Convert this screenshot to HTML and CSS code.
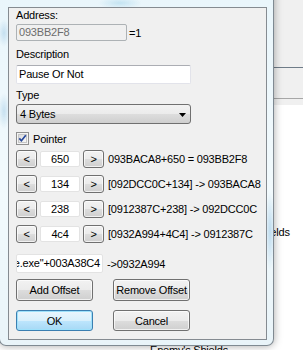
FILE: index.html
```html
<!DOCTYPE html>
<html lang="en">
<head>
  <meta charset="UTF-8">
  <title>Change address</title>
  <link rel="stylesheet" href="styles.css">
</head>
<body>

  <!-- Main window behind the dialog -->
  <div class="bg-window">
    <div class="bg-toolbar"></div>
    <div class="bg-bar"></div>
    <div class="bg-list">
      <div class="bg-item item-shields">Shields</div>
      <div class="bg-item item-v">v</div>
      <div class="bg-item item-enemy">Enemy's Shields</div>
    </div>
  </div>

  <!-- Change address dialog -->
  <div class="dialog">
    <div class="client">
      <div class="label">Address:</div>
      <div class="addr-row">
        <div class="textbox disabled addr-box">093BB2F8</div>
        <span class="addr-eq">=1</span>
      </div>

      <div class="label gap-label">Description</div>
      <div class="textbox wide desc-box">Pause Or Not</div>

      <div class="label type-label">Type</div>
      <div class="combo wide">
        <span>4 Bytes</span>
        <svg class="combo-arrow" width="7" height="4" viewBox="0 0 7 4"><path d="M0 0H7L3.5 4Z" fill="#000"/></svg>
      </div>

      <div class="check-row">
        <svg class="checkbox" width="13" height="13" viewBox="0 0 13 13">
          <defs>
            <linearGradient id="cbfill" x1="0" y1="0" x2="1" y2="1">
              <stop offset="0" stop-color="#d8d8d8"/>
              <stop offset="1" stop-color="#fbfbfb"/>
            </linearGradient>
          </defs>
          <rect x="0.5" y="0.5" width="12" height="12" fill="#f4f4f4" stroke="#8f8f8f"/>
          <rect x="2.5" y="2.5" width="8" height="8" fill="url(#cbfill)" stroke="#c6c6c6"/>
          <path d="M3.3 6.4L5.4 8.8L9.8 3.3" fill="none" stroke="#26479a" stroke-width="1.7"/>
        </svg>
        <span>Pointer</span>
      </div>

      <div class="offset-row first">
        <div class="btn small">&lt;</div>
        <div class="textbox offset-box">650</div>
        <div class="btn small">&gt;</div>
        <span class="offset-info">093BACA8+650 = 093BB2F8</span>
      </div>
      <div class="offset-row">
        <div class="btn small">&lt;</div>
        <div class="textbox offset-box">134</div>
        <div class="btn small">&gt;</div>
        <span class="offset-info">[092DCC0C+134] -&gt; 093BACA8</span>
      </div>
      <div class="offset-row">
        <div class="btn small">&lt;</div>
        <div class="textbox offset-box">238</div>
        <div class="btn small">&gt;</div>
        <span class="offset-info">[0912387C+238] -&gt; 092DCC0C</span>
      </div>
      <div class="offset-row">
        <div class="btn small">&lt;</div>
        <div class="textbox offset-box">4c4</div>
        <div class="btn small">&gt;</div>
        <span class="offset-info">[0932A994+4C4] -&gt; 0912387C</span>
      </div>

      <div class="base-row">
        <div class="textbox base-box"><span>STOnline.exe"+003A38C4</span></div>
        <span class="base-info">-&gt;0932A994</span>
      </div>

      <div class="btn-row">
        <div class="btn">Add Offset</div>
        <div class="btn">Remove Offset</div>
      </div>
      <div class="btn-row ok-row">
        <div class="btn default">OK</div>
        <div class="btn">Cancel</div>
      </div>
    </div>
  </div>

</body>
</html>
```

FILE: styles.css
```css
* { margin: 0; padding: 0; box-sizing: border-box; }
body {
  width: 303px;
  height: 350px;
  overflow: hidden;
  position: relative;
  font-family: 'Liberation Sans', Arial, sans-serif;
  font-size: 11px;
  letter-spacing: -0.2px;
  color: #000;
  background: #fff;
}

/* window behind */
.bg-window { height: 350px; display: flex; flex-direction: column; }
.bg-toolbar { height: 68px; background: #f0f0f0; border-bottom: 1px solid #6f7c88; }
.bg-bar { height: 31px; background: #f0f0f0; border-bottom: 1px solid #a7a7a7; }
.bg-list { flex: 1; background: #fff; border-top: 6px solid #f0f0f0; position: relative; }
.bg-item { position: absolute; white-space: nowrap; line-height: 13px; color: #000; }
.item-shields { left: 255px; top: 121px; }
.item-v { left: 268px; top: 138px; }
.item-enemy { left: 150px; top: 239px; }

/* dialog frame */
.dialog {
  position: absolute;
  left: -1px;
  top: -30px;
  width: 275px;
  height: 376px;
  padding: 36px 6px 5px 8px;
  border: 1px solid rgba(40, 50, 60, 0.55);
  border-radius: 0 0 7px 7px;
  background:
    radial-gradient(ellipse 6px 14px at 4px 62px, rgba(150, 195, 225, 0.45), transparent),
    radial-gradient(ellipse 6px 18px at 4px 140px, rgba(150, 195, 225, 0.45), transparent),
    radial-gradient(ellipse 22px 6px at 120px 32px, rgba(150, 205, 230, 0.45), transparent),
    radial-gradient(ellipse 5px 40px at 270px 260px, rgba(140, 190, 225, 0.5), transparent),
    linear-gradient(180deg, #e8f5fb, #f2fafd 60%, #e9f4f9);
  box-shadow: 0 0 8px rgba(0, 0, 0, 0.35);
}
.client {
  height: 100%;
  background: #f0f0f0;
  border: 1px solid #858b91;
  padding: 1px 0 0 7px;
}

.label { line-height: 13px; white-space: nowrap; }
.gap-label { margin-top: 7px; }
.type-label { margin-top: 5px; }

/* text boxes */
.textbox {
  background: #fff;
  border: 1px solid #e2e3ea;
  border-top-color: #abadb3;
  border-radius: 2px;
  line-height: 15px;
  padding: 0 2px;
  white-space: nowrap;
  overflow: hidden;
}
.disabled { background: #f0f0f0; border-color: #adb2b5; color: #6d6d6d; }
.wide { width: 175px; }

.addr-row { display: flex; align-items: center; margin-top: 2px; }
.addr-box { width: 111px; height: 17px; }
.addr-eq { margin-left: 2px; }
.desc-box { height: 19px; line-height: 17px; margin-top: 4px; }

/* combo box */
.combo {
  margin-top: 2px;
  height: 20px;
  display: flex;
  align-items: center;
  justify-content: space-between;
  padding: 0 4px 0 3px;
  border: 1px solid #707070;
  border-radius: 3px;
  background: linear-gradient(180deg, #f2f2f2 0%, #ebebeb 50%, #dddddd 51%, #cfcfcf 100%);
}
.combo-arrow { margin-top: 1px; }

.check-row { display: flex; align-items: center; gap: 4px; margin-top: 8px; height: 13px; }

/* offset rows */
.offset-row { display: flex; align-items: center; margin-top: 7px; height: 18px; }
.offset-row.first { margin-top: 5px; }
.offset-box { width: 40px; height: 16px; margin: 0 3px; text-align: center; border-color: #e3e3e3; }
.offset-info { margin-left: 4px; white-space: nowrap; }

.base-row { display: flex; align-items: center; margin-top: 11px; }
.base-box { width: 87px; height: 19px; display: flex; justify-content: flex-end; line-height: 17px; border-color: #e3e3e3; }
.base-info { margin-left: 4px; white-space: nowrap; }

/* buttons */
.btn {
  height: 22px;
  width: 77px;
  display: flex;
  align-items: center;
  justify-content: center;
  border: 1px solid #707070;
  border-radius: 3px;
  background: linear-gradient(180deg, #f2f2f2 0%, #ebebeb 50%, #dddddd 51%, #cfcfcf 100%);
  box-shadow: inset 0 0 0 1px rgba(255, 255, 255, 0.7);
  white-space: nowrap;
}
.btn.small { width: 21px; height: 18px; padding-bottom: 1px; }
.btn.default {
  border-color: #3c7fb1;
  background: linear-gradient(180deg, #eaf6fd 0%, #d9f0fc 50%, #bee6fd 51%, #a7d9f5 100%);
  box-shadow: inset 0 0 0 1px #9ee1fb;
}
.btn-row { display: flex; gap: 20px; margin-top: 6px; }
.ok-row { margin-top: 9px; }
.ok-row .btn { height: 21px; }
```
